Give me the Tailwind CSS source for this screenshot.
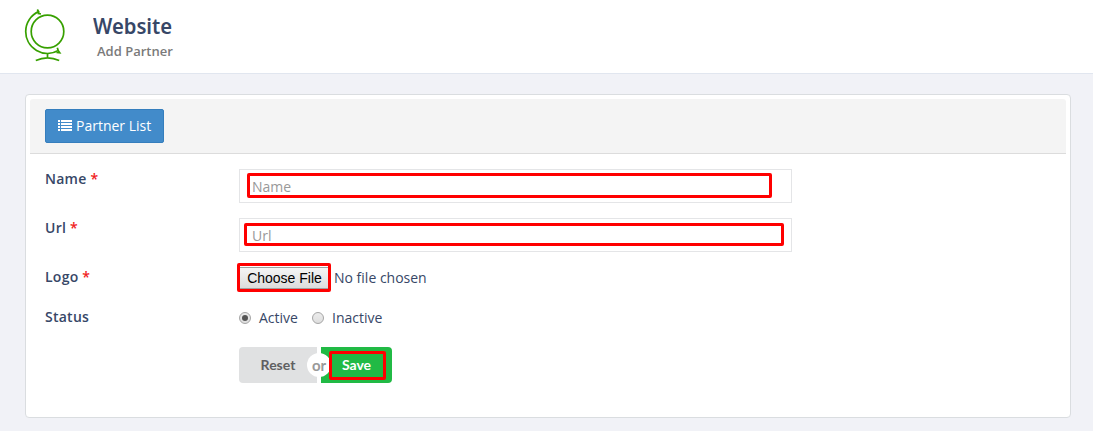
<!DOCTYPE html>
<html lang="en">
<head>
<meta charset="utf-8">
<title>Website - Add Partner</title>
<script src="https://cdn.jsdelivr.net/npm/@tailwindcss/browser@4"></script>
</head>
<body class="h-[431px] overflow-hidden bg-[#f1f2f7] font-['Open_Sans',sans-serif] text-sm leading-5 text-[#374767]">
<header class="flex h-[74px] border-b border-[#e1e6ef] bg-white pl-6">
  <svg class="mt-2 h-[54px] w-[42px] shrink-0" viewBox="24 8 42 54" fill="none" stroke="#37a000" stroke-width="1.7">
    <circle cx="47.5" cy="31.5" r="16.3"/>
    <path d="M39 11.4A22 22 0 0 0 25.7 31.5A21.8 21.8 0 0 0 58.3 50.5M37.3 9.5l1.5 2.5l-.3 1.6l2.4 .3M57.3 47.8l1 3l1.4 2l-3.2-.3M47.5 53.5v4.5M35.8 60.6q11.7-5.4 23.4 0"/>
  </svg>
  <div class="pl-[27px]">
    <h1 class="mt-[11px] w-[92px] origin-left scale-x-[0.92] font-['Noto_Sans',sans-serif] text-[22px] leading-7 font-semibold">Website</h1>
    <p class="mt-[2px] pl-1 text-[13px] leading-5 font-semibold text-[#7a7a7a]">Add Partner</p>
  </div>
</header>
<main class="pt-5 pl-[25px]">
  <section class="h-[324px] w-[1046px] rounded-[4px] border border-[#dadde0] bg-white p-1">
    <div class="flex h-[55px] items-center rounded-t-[3px] border-b border-[#dcdcdc] bg-[#f4f4f4] pl-[15px]">
      <button class="flex h-[34px] w-[119px] items-center rounded-[2px] border border-[#357ebd] bg-[#428bca] pl-3 text-white">
        <svg class="mr-1 h-[12px] w-[14px]" viewBox="0 0 14 12" fill="#fff"><path d="M0 0h2v2H0zM3 0h11v2H3zM0 3h2v2H0zM3 3h11v2H3zM0 6h2v2H0zM3 6h11v2H3zM0 9h2v2H0zM3 9h11v2H3z"/></svg>
        <span>Partner List</span>
      </button>
    </div>
    <form class="grid grid-cols-[194px_553px] grid-rows-[34px_34px_25px_25px_36px] gap-y-[15px] pt-[15px] pl-[15px]">
      <label class="font-semibold tracking-[0.25px]">Name <span class="text-[#f02020]">*</span></label>
      <div class="relative border border-[#e4e5e7] px-3 py-[7px] text-[#999]">Name
        <div class="absolute top-[3px] left-[7px] h-[25px] w-[525px] rounded-[2px] border-3 border-[#ff0000]"></div>
      </div>
      <label class="font-semibold tracking-[0.25px]">Url <span class="text-[#f02020]">*</span></label>
      <div class="relative border border-[#e4e5e7] px-3 py-[7px] text-[#999]">Url
        <div class="absolute top-[4px] left-[4px] h-[23px] w-[540px] rounded-[2px] border-3 border-[#ff0000]"></div>
      </div>
      <label class="font-semibold tracking-[0.25px]">Logo <span class="text-[#f02020]">*</span></label>
      <div class="relative flex pt-px">
        <span class="-mt-px h-[22px] w-[91px] border border-[#a0a0a0] bg-linear-to-b from-[#f5f5f5] to-[#dcdcdc] text-center font-['Liberation_Sans',sans-serif] text-[14px] leading-[20px] text-black">Choose File</span>
        <span class="pl-[4px]">No file chosen</span>
        <div class="absolute top-[-4px] left-[-2px] h-[29px] w-[94px] rounded-[2px] border-3 border-[#ff0000]"></div>
      </div>
      <label class="font-semibold tracking-[0.25px]">Status</label>
      <div class="flex">
        <span class="mt-[5px] flex h-[12px] w-[12px] items-center justify-center rounded-full border border-[#a5a5a5] bg-linear-to-b from-[#ececec] to-[#dedede]"><i class="h-[6px] w-[6px] rounded-full bg-[#555]"></i></span>
        <span class="ml-[8px] w-[53px] pt-px">Active</span>
        <span class="mt-[5px] h-[12px] w-[12px] rounded-full border border-[#a5a5a5] bg-linear-to-b from-[#ececec] to-[#dedede]"></span>
        <span class="ml-[8px] pt-px">Inactive</span>
      </div>
      <div></div>
      <div class="relative flex h-9 font-['Lato',sans-serif] text-[14px] leading-9 font-bold">
        <button class="w-[78px] rounded-l-[4px] bg-[#e0e1e2] text-center text-[#5f6061]">Reset</button>
        <span class="w-1"></span>
        <button class="w-[71px] rounded-r-[4px] bg-[#21ba45] text-center text-white">Save</button>
        <span class="absolute top-[6px] left-[68px] h-6 w-6 rounded-full bg-white text-center text-[15px] leading-[24px] text-[#999]">or</span>
        <div class="absolute top-[4px] left-[90px] h-[29px] w-[57px] rounded-[2px] border-3 border-[#ff0000]"></div>
      </div>
    </form>
  </section>
</main>
</body>
</html>
